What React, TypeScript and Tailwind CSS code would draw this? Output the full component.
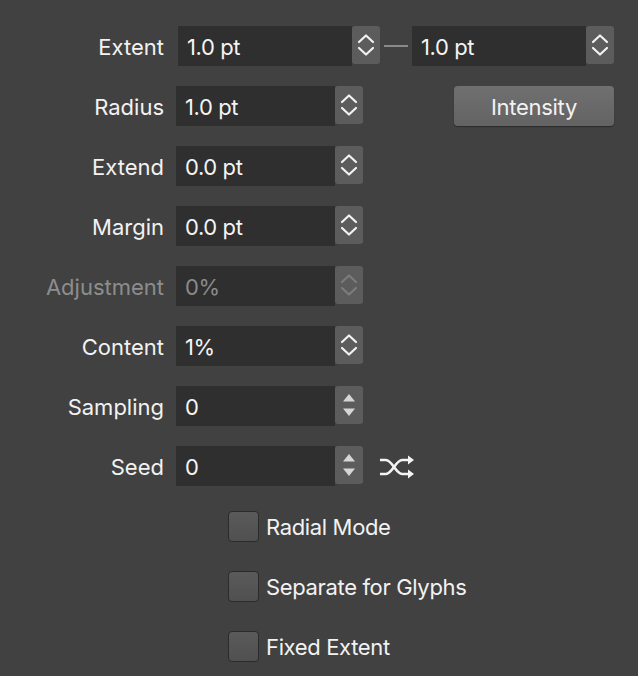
import React from "react";

const font = { fontFamily: "Inter, 'Noto Sans', sans-serif" };

function Chevrons({ dim }: { dim?: boolean }) {
  return (
    <svg width="20" height="26" viewBox="0 0 20 26" fill="none">
      <path
        d="M3 10 L10 3.5 L17 10 M3 16 L10 22.5 L17 16"
        stroke={dim ? "#7c7c7c" : "#f2f2f2"}
        strokeWidth="2.2"
        strokeLinecap="round"
        strokeLinejoin="round"
      />
    </svg>
  );
}

function Triangles() {
  return (
    <svg width="16" height="30" viewBox="0 0 16 30">
      <path d="M8 4 L14 11.5 L2 11.5 Z" fill="#d6d6d6" />
      <path d="M8 26 L14 18.5 L2 18.5 Z" fill="#d6d6d6" />
    </svg>
  );
}

function Field({
  value,
  width,
  dim,
  arrows,
}: {
  value: string;
  width: string;
  dim?: boolean;
  arrows?: boolean;
}) {
  return (
    <div className="flex h-[40px]">
      <div
        className={`${width} h-full bg-[#2f2f2f] flex items-center pl-[9px] pt-[2px] text-[22px] tracking-[-0.4px] ${
          dim ? "text-[#8a8a8a]" : "text-[#f4f4f4]"
        }`}
      >
        {value}
      </div>
      <div className="w-[28px] h-[38px] bg-[#5c5c5c] rounded-[3px] flex items-center justify-center">
        {arrows ? <Triangles /> : <Chevrons dim={dim} />}
      </div>
    </div>
  );
}

function Label({ text, dim }: { text: string; dim?: boolean }) {
  return (
    <div
      className={`w-[164px] text-right text-[22px] mr-[12px] pt-[3px] ${
        dim ? "text-[#8d8d8d]" : "text-[#f2f2f2]"
      }`}
    >
      {text}
    </div>
  );
}

function Shuffle() {
  return (
    <svg width="36" height="24" viewBox="0 0 36 24" fill="none">
      <path
        d="M1 5 H7 C13 5 17 19 23 19 H31 M1 19 H7 C13 19 17 5 23 5 H31"
        stroke="#f4f4f4"
        strokeWidth="2.6"
      />
      <path d="M29 0.5 L35 5 L29 9.5 Z" fill="#f4f4f4" />
      <path d="M29 14.5 L35 19 L29 23.5 Z" fill="#f4f4f4" />
    </svg>
  );
}

function Checkbox({ label }: { label: string }) {
  return (
    <div className="flex items-center h-[40px] pl-[228px]">
      <div className="w-[31px] h-[31px] rounded-[4px] border border-[#2b2b2b] bg-gradient-to-b from-[#5a5a5a] to-[#505050]" />
      <div className="ml-[7px] pt-[2px] text-[22px] tracking-[-0.35px] text-[#f2f2f2]">{label}</div>
    </div>
  );
}

const rows = [
  { label: "Radius", value: "1.0 pt" },
  { label: "Extend", value: "0.0 pt" },
  { label: "Margin", value: "0.0 pt" },
  { label: "Adjustment", value: "0%", dim: true },
  { label: "Content", value: "1%" },
  { label: "Sampling", value: "0", arrows: true },
  { label: "Seed", value: "0", arrows: true },
];

export default function App() {
  return (
    <div
      className="w-[638px] h-[676px] bg-[#414141] pt-[26px] flex flex-col gap-[20px] overflow-hidden"
      style={font}
    >
      {/* Extent row */}
      <div className="flex items-center h-[40px]">
        <Label text="Extent" />
        <div className="ml-[2px]">
          <Field value="1.0 pt" width="w-[174px]" />
        </div>
        <div className="w-[24px] h-[2px] bg-[#8a8a8a] ml-[4px] mr-[4px]" />
        <Field value="1.0 pt" width="w-[174px]" />
      </div>

      {rows.map((r) => (
        <div key={r.label} className="flex items-center h-[40px]">
          <Label text={r.label} dim={r.dim} />
          <Field value={r.value} width="w-[159px]" dim={r.dim} arrows={r.arrows} />
          {r.label === "Radius" && (
            <button className="ml-[91px] w-[160px] h-[40px] pt-[2px] rounded-[4px] bg-gradient-to-b from-[#707070] to-[#636363] text-[22px] tracking-[-0.3px] text-[#f2f2f2] shadow-[0_1px_1px_rgba(0,0,0,0.35)]">
              Intensity
            </button>
          )}
          {r.label === "Seed" && (
            <div className="ml-[16px] mt-[2px] flex items-center">
              <Shuffle />
            </div>
          )}
        </div>
      ))}

      <Checkbox label="Radial Mode" />
      <Checkbox label="Separate for Glyphs" />
      <Checkbox label="Fixed Extent" />
    </div>
  );
}
